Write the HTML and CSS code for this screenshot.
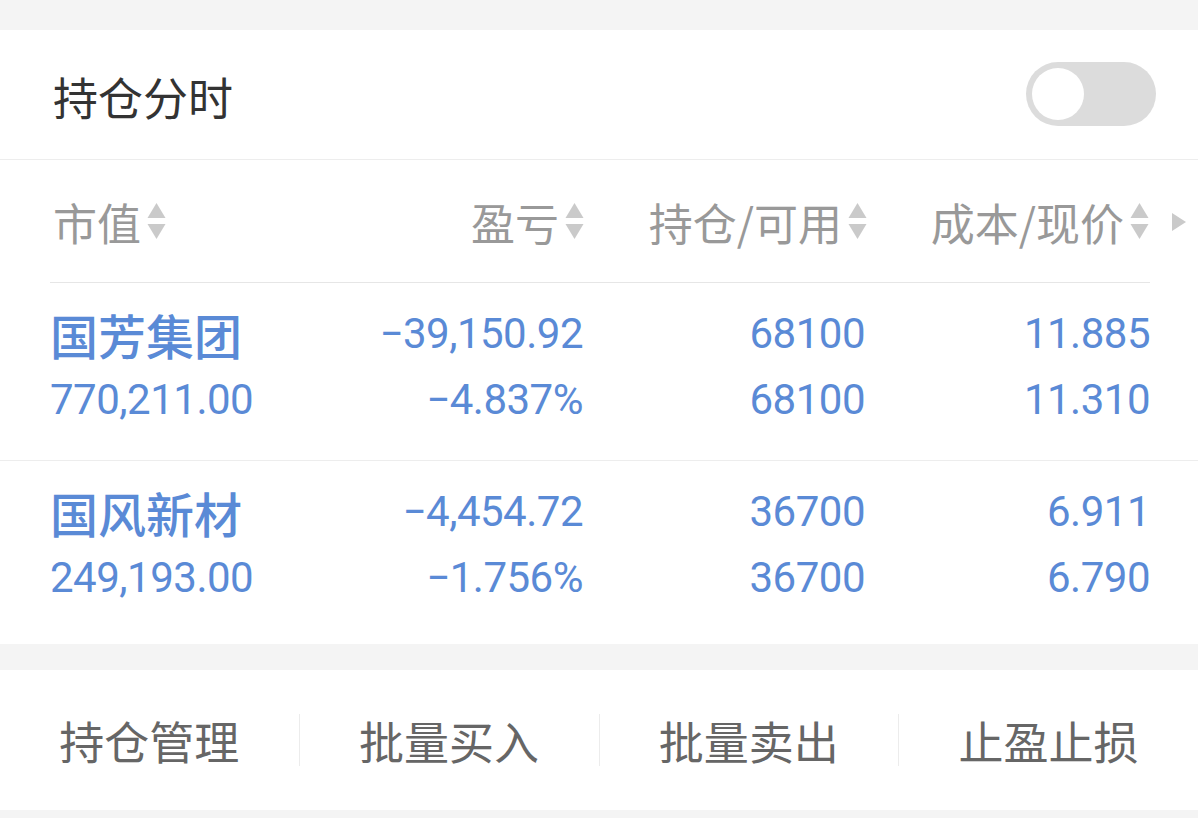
FILE: index.html
```html
<!DOCTYPE html>
<html lang="zh-CN">
<head>
    <meta charset="UTF-8">
    <meta name="viewport" content="width=device-width, initial-scale=1.0">
    <title>持仓分时</title>
    <link rel="stylesheet" href="styles.css">
</head>
<body>
    <div class="positions">
        <div class="title-row">
            <span class="title">持仓分时</span>
            <span class="switch"><span class="knob"></span></span>
        </div>

        <div class="table-head">
            <div class="th th-left">市值<svg class="sort" viewBox="0 0 20 38"><path d="M10 0 L19 15 L1 15 Z"/><path d="M1 21 L19 21 L10 36 Z"/></svg></div>
            <div class="th">盈亏<svg class="sort" viewBox="0 0 20 38"><path d="M10 0 L19 15 L1 15 Z"/><path d="M1 21 L19 21 L10 36 Z"/></svg></div>
            <div class="th">持仓/可用<svg class="sort" viewBox="0 0 20 38"><path d="M10 0 L19 15 L1 15 Z"/><path d="M1 21 L19 21 L10 36 Z"/></svg></div>
            <div class="th">成本/现价<svg class="sort" viewBox="0 0 20 38"><path d="M10 0 L19 15 L1 15 Z"/><path d="M1 21 L19 21 L10 36 Z"/></svg></div>
            <div class="more"><svg viewBox="0 0 14 18"><path d="M0 0 L14 9 L0 18 Z"/></svg></div>
        </div>

        <div class="row">
            <div class="cell cell-left">
                <div class="name">国芳集团</div>
                <div class="num">770,211.00</div>
            </div>
            <div class="cell">
                <div class="num">−39,150.92</div>
                <div class="num">−4.837%</div>
            </div>
            <div class="cell">
                <div class="num">68100</div>
                <div class="num">68100</div>
            </div>
            <div class="cell">
                <div class="num">11.885</div>
                <div class="num">11.310</div>
            </div>
        </div>

        <div class="row">
            <div class="cell cell-left">
                <div class="name">国风新材</div>
                <div class="num">249,193.00</div>
            </div>
            <div class="cell">
                <div class="num">−4,454.72</div>
                <div class="num">−1.756%</div>
            </div>
            <div class="cell">
                <div class="num">36700</div>
                <div class="num">36700</div>
            </div>
            <div class="cell">
                <div class="num">6.911</div>
                <div class="num">6.790</div>
            </div>
        </div>
    </div>

    <div class="actions">
        <div class="action">持仓管理</div>
        <div class="action">批量买入</div>
        <div class="action">批量卖出</div>
        <div class="action">止盈止损</div>
    </div>
</body>
</html>
```

FILE: styles.css
```css
* {
    margin: 0;
    padding: 0;
    box-sizing: border-box;
}

body {
    font-family: "Noto Sans CJK SC", sans-serif;
    background: #f4f4f4;
    padding: 30px 0 8px;
}

.positions {
    background: white;
    padding-bottom: 6px;
}

.title-row {
    height: 130px;
    display: flex;
    align-items: center;
    justify-content: space-between;
    padding: 0 42px 0 53px;
    border-bottom: 1px solid #ededed;
}

.title {
    font-size: 45px;
    color: #333;
    margin-top: 4px;
}

.switch {
    width: 130px;
    height: 64px;
    border-radius: 32px;
    background: #dcdcdc;
    display: flex;
    align-items: center;
    padding-left: 6px;
    margin-top: -2px;
}

.knob {
    width: 52px;
    height: 52px;
    border-radius: 50%;
    background: white;
}

.table-head {
    height: 123px;
    display: grid;
    grid-template-columns: 252px 283px 283px 282px 1fr;
    align-items: center;
    padding-left: 50px;
    background: linear-gradient(#e6e6e6, #e6e6e6) no-repeat 50px 100% / 1100px 1px;
}

.th {
    display: flex;
    align-items: center;
    justify-content: flex-end;
    gap: 5px;
    font-size: 44px;
    color: #999;
}

.th-left {
    justify-content: flex-start;
    padding-left: 3px;
}

.sort {
    width: 21px;
    height: 38px;
    fill: #cacaca;
}

.more {
    padding-left: 22px;
    display: flex;
}

.more svg {
    width: 14px;
    height: 18px;
    fill: #cacaca;
}

.row {
    display: grid;
    grid-template-columns: 252px 281px 282px 285px;
    padding: 18px 48px 27px 50px;
    border-bottom: 1px solid #ededed;
    color: #5a8ad6;
}

.row:last-child {
    border-bottom: none;
}

.cell {
    text-align: right;
}

.cell-left {
    text-align: left;
}

.name {
    font-size: 48px;
    font-weight: 500;
    line-height: 66px;
}

.num {
    font-family: Roboto, "Liberation Sans", sans-serif;
    font-size: 42px;
    letter-spacing: -0.5px;
    line-height: 66px;
}

.actions {
    margin-top: 26px;
    height: 140px;
    background: white;
    display: flex;
    align-items: center;
}

.action {
    flex: 1;
    height: 52px;
    display: flex;
    align-items: center;
    justify-content: center;
    font-size: 45px;
    color: #666;
    border-left: 1px solid #ececec;
}

.action:first-child {
    border-left: none;
}
```
